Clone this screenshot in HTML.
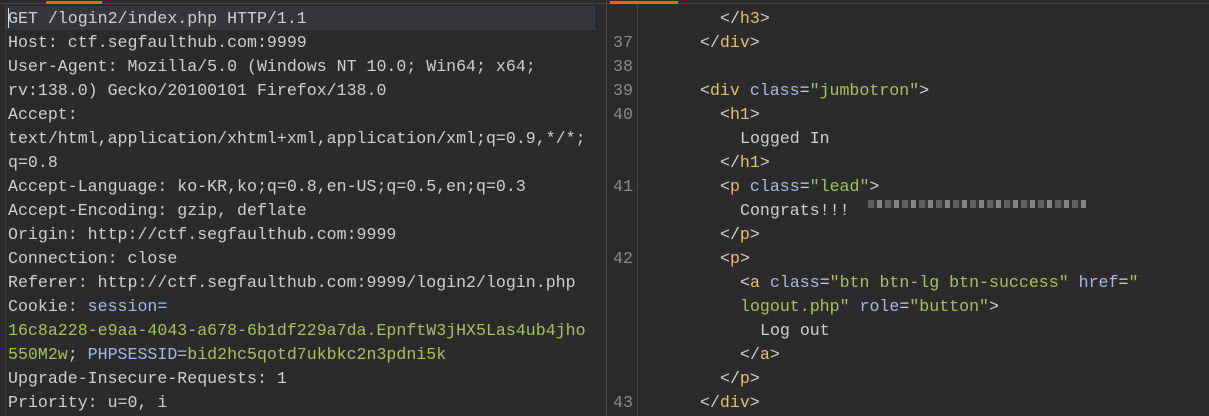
<!DOCTYPE html>
<html style="width:1209px;height:416px;overflow:hidden"><head><style>
body{margin:0;width:1209px;height:416px;background:#2b2b2b;overflow:hidden;position:relative;font-family:"Liberation Mono","Noto Sans CJK KR",monospace;font-size:16.6px;color:#cfcfcf}
.l{position:absolute;white-space:pre;line-height:24px;height:24px}
.t{color:#e8bf6a}.a{color:#a9b7e6}.s{color:#a5c25c}.n{color:#8a8a8a}
</style></head><body>
<div style="position:absolute;left:0;top:3px;width:1209px;height:1px;background:#444"></div>
<div style="position:absolute;left:46px;top:1px;width:56px;height:3px;background:#e0622d"></div>
<div style="position:absolute;left:610px;top:1px;width:68px;height:3px;background:#e0622d"></div>
<div style="position:absolute;left:606px;top:0;width:1px;height:416px;background:#4a4a4a"></div>
<div style="position:absolute;left:637px;top:4px;width:1px;height:412px;background:#444"></div>
<div style="position:absolute;left:5px;top:4px;width:1px;height:412px;background:#3a3a3a"></div>
<div style="position:absolute;left:6px;top:6px;width:589px;height:24px;background:#33373b"></div>
<div style="position:absolute;left:8px;top:8px;width:1px;height:20px;background:#ddd"></div>

<div class="l" style="left:8px;top:7px">GET /login2/index.php HTTP/1.1</div>
<div class="l" style="left:8px;top:31px">Host: ctf.segfaulthub.com:9999</div>
<div class="l" style="left:8px;top:55px">User-Agent: Mozilla/5.0 (Windows NT 10.0; Win64; x64;</div>
<div class="l" style="left:8px;top:79px">rv:138.0) Gecko/20100101 Firefox/138.0</div>
<div class="l" style="left:8px;top:103px">Accept:</div>
<div class="l" style="left:8px;top:127px">text/html,application/xhtml+xml,application/xml;q=0.9,*/*;</div>
<div class="l" style="left:8px;top:151px">q=0.8</div>
<div class="l" style="left:8px;top:175px">Accept-Language: ko-KR,ko;q=0.8,en-US;q=0.5,en;q=0.3</div>
<div class="l" style="left:8px;top:199px">Accept-Encoding: gzip, deflate</div>
<div class="l" style="left:8px;top:223px">Origin: http://ctf.segfaulthub.com:9999</div>
<div class="l" style="left:8px;top:247px">Connection: close</div>
<div class="l" style="left:8px;top:271px">Referer: http://ctf.segfaulthub.com:9999/login2/login.php</div>
<div class="l" style="left:8px;top:295px">Cookie: <span class="a">session=</span></div>
<div class="l s" style="left:8px;top:319px">16c8a228-e9aa-4043-a678-6b1df229a7da.EpnftW3jHX5Las4ub4jho</div>
<div class="l" style="left:8px;top:343px"><span class="s">550M2w</span>; <span class="a">PHPSESSID=</span><span class="s">bid2hc5qotd7ukbkc2n3pdni5k</span></div>
<div class="l" style="left:8px;top:367px">Upgrade-Insecure-Requests: 1</div>
<div class="l" style="left:8px;top:391px">Priority: u=0, i</div>

<div class="l n" style="left:613px;top:31px">37</div>
<div class="l n" style="left:613px;top:55px">38</div>
<div class="l n" style="left:613px;top:79px">39</div>
<div class="l n" style="left:613px;top:103px">40</div>
<div class="l n" style="left:613px;top:175px">41</div>
<div class="l n" style="left:613px;top:247px">42</div>
<div class="l n" style="left:613px;top:391px">43</div>

<div class="l" style="left:720px;top:7px">&lt;/<span class="t">h3</span>&gt;</div>
<div class="l" style="left:700px;top:31px">&lt;/<span class="t">div</span>&gt;</div>
<div class="l" style="left:700px;top:79px">&lt;<span class="t">div</span> <span class="a">class</span>=<span class="s">"jumbotron"</span>&gt;</div>
<div class="l" style="left:720px;top:103px">&lt;<span class="t">h1</span>&gt;</div>
<div class="l" style="left:740px;top:127px">Logged In</div>
<div class="l" style="left:720px;top:151px">&lt;/<span class="t">h1</span>&gt;</div>
<div class="l" style="left:720px;top:175px">&lt;<span class="t">p</span> <span class="a">class</span>=<span class="s">"lead"</span>&gt;</div>
<div class="l" style="left:740px;top:199px">Congrats!!!</div>
<div style="position:absolute;left:868px;top:200px;width:218px;height:8px;background:repeating-linear-gradient(90deg,#777 0 6px,#3a3a3a 6px 9px,#aaa 9px 14px,#2e2e2e 14px 17px);opacity:.7"></div>
<div class="l" style="left:720px;top:223px">&lt;/<span class="t">p</span>&gt;</div>
<div class="l" style="left:720px;top:247px">&lt;<span class="t">p</span>&gt;</div>
<div class="l" style="left:740px;top:271px">&lt;<span class="t">a</span> <span class="a">class</span>=<span class="s">"btn btn-lg btn-success"</span> <span class="a">href</span>=<span class="s">"</span></div>
<div class="l" style="left:740px;top:295px"><span class="s">logout.php"</span> <span class="a">role</span>=<span class="s">"button"</span>&gt;</div>
<div class="l" style="left:760px;top:319px">Log out</div>
<div class="l" style="left:740px;top:343px">&lt;/<span class="t">a</span>&gt;</div>
<div class="l" style="left:720px;top:367px">&lt;/<span class="t">p</span>&gt;</div>
<div class="l" style="left:700px;top:391px">&lt;/<span class="t">div</span>&gt;</div>
</body></html>
